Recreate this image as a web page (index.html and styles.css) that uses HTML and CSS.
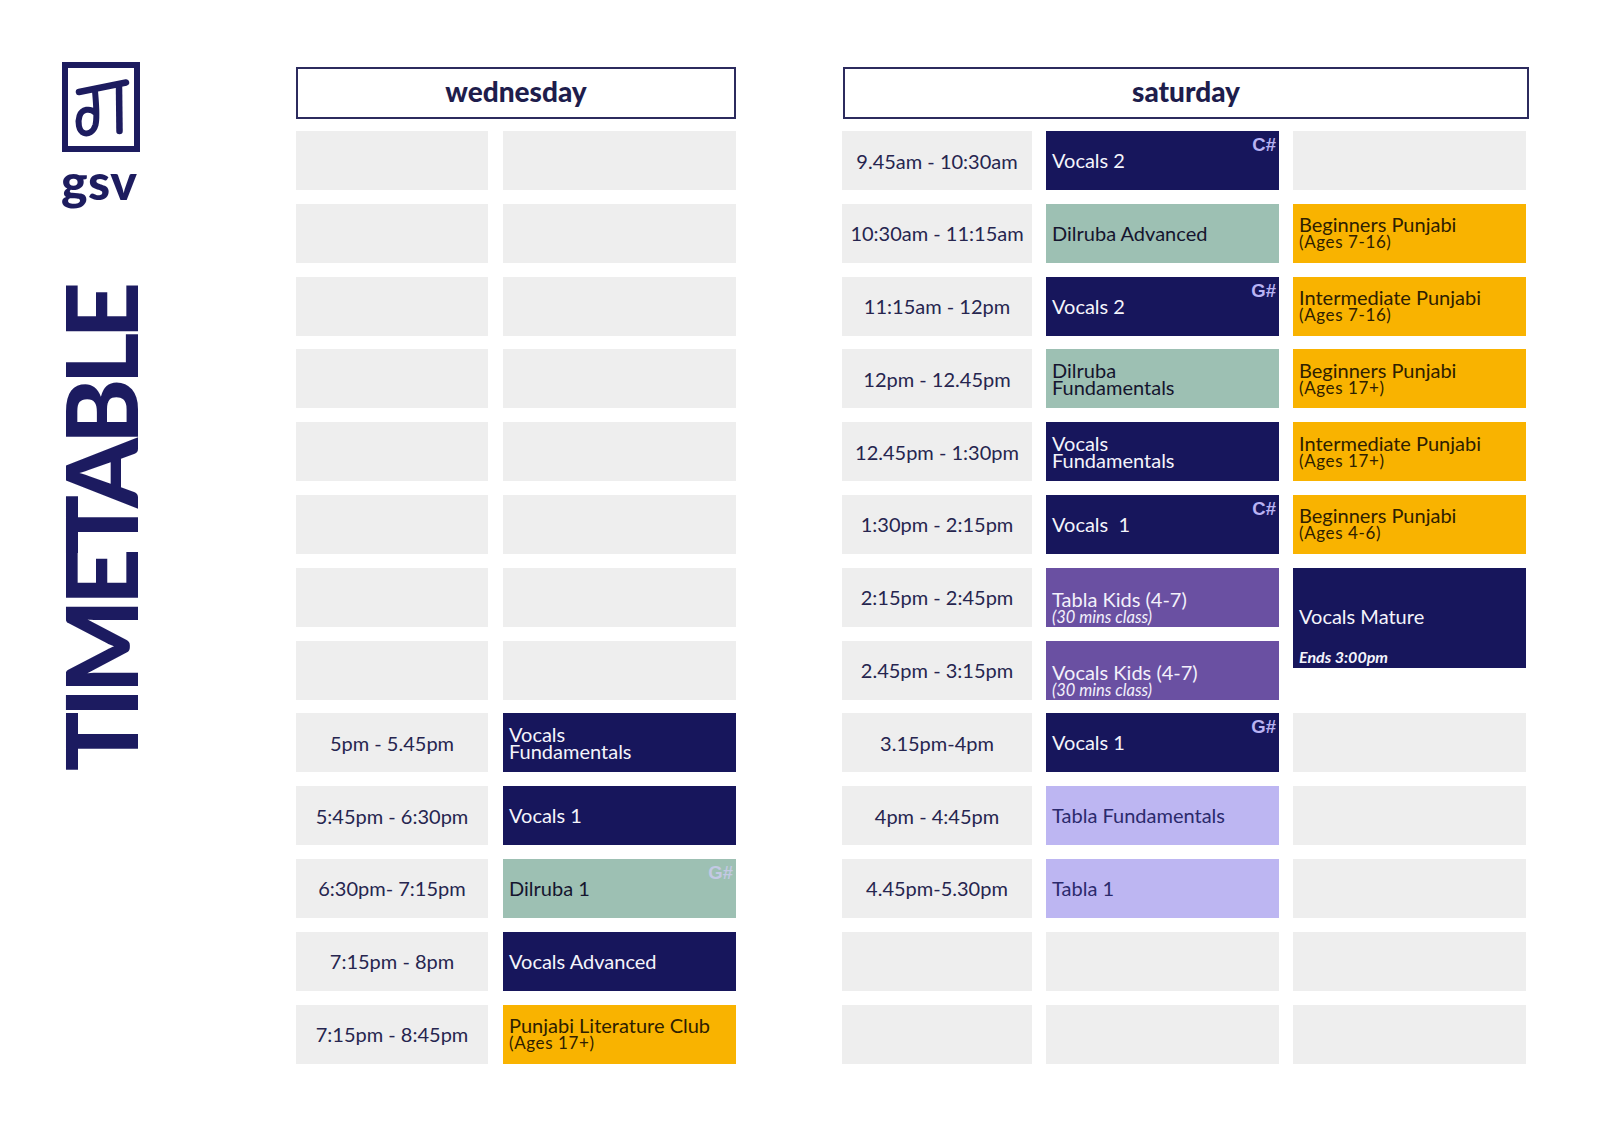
FILE: index.html
```html
<!DOCTYPE html>
<html lang="en">
<head>
<meta charset="utf-8">
<title>GSV Timetable</title>
<link rel="stylesheet" href="styles.css">
</head>
<body>
<div class="page">
  <aside class="side">
    <svg class="logo-mark" width="78" height="90" viewBox="0 0 78 90" aria-hidden="true">
      <rect x="3" y="3" width="72" height="84" fill="none" stroke="#1d1c5f" stroke-width="6"/>
      <path d="M17 30 L64 20.5" fill="none" stroke="#1d1c5f" stroke-width="6.5" stroke-linecap="round"/>
      <path d="M57 24 L57.5 69" fill="none" stroke="#1d1c5f" stroke-width="6.5" stroke-linecap="round"/>
      <path d="M33 29 C34 41 35.5 55 33.5 63 C31.5 70 26 72.5 22 71 C16.5 69 15.5 60 17.5 54 C20 47 28 45.5 33.5 51" fill="none" stroke="#1d1c5f" stroke-width="6" stroke-linecap="round"/>
    </svg>
    <div class="gsv">gsv</div>
    <div class="title">TIMETABLE</div>
  </aside>

  <section class="day day-wed">
    <header class="day-head">wednesday</header>
    <div class="grid grid-wed">
      <div class="cell"></div><div class="cell"></div>
      <div class="cell"></div><div class="cell"></div>
      <div class="cell"></div><div class="cell"></div>
      <div class="cell"></div><div class="cell"></div>
      <div class="cell"></div><div class="cell"></div>
      <div class="cell"></div><div class="cell"></div>
      <div class="cell"></div><div class="cell"></div>
      <div class="cell"></div><div class="cell"></div>
      <div class="cell time">5pm - 5.45pm</div>
      <div class="cell navy tight"><span>Vocals</span><span>Fundamentals</span></div>
      <div class="cell time">5:45pm - 6:30pm</div>
      <div class="cell navy">Vocals 1</div>
      <div class="cell time">6:30pm- 7:15pm</div>
      <div class="cell sage">Dilruba 1<span class="tag tag-faint">G#</span></div>
      <div class="cell time">7:15pm - 8pm</div>
      <div class="cell navy">Vocals Advanced</div>
      <div class="cell time">7:15pm - 8:45pm</div>
      <div class="cell orange tight"><span>Punjabi Literature Club</span><span class="sub">(Ages 17+)</span></div>
    </div>
  </section>

  <section class="day day-sat">
    <header class="day-head">saturday</header>
    <div class="grid grid-sat">
      <div class="cell time">9.45am - 10:30am</div>
      <div class="cell navy">Vocals 2<span class="tag">C#</span></div>
      <div class="cell"></div>

      <div class="cell time">10:30am - 11:15am</div>
      <div class="cell sage">Dilruba Advanced</div>
      <div class="cell orange tight"><span>Beginners Punjabi</span><span class="sub">(Ages 7-16)</span></div>

      <div class="cell time">11:15am - 12pm</div>
      <div class="cell navy">Vocals 2<span class="tag">G#</span></div>
      <div class="cell orange tight"><span>Intermediate Punjabi</span><span class="sub">(Ages 7-16)</span></div>

      <div class="cell time">12pm - 12.45pm</div>
      <div class="cell sage tight"><span>Dilruba</span><span>Fundamentals</span></div>
      <div class="cell orange tight"><span>Beginners Punjabi</span><span class="sub">(Ages 17+)</span></div>

      <div class="cell time">12.45pm - 1:30pm</div>
      <div class="cell navy tight"><span>Vocals</span><span>Fundamentals</span></div>
      <div class="cell orange tight"><span>Intermediate Punjabi</span><span class="sub">(Ages 17+)</span></div>

      <div class="cell time">1:30pm - 2:15pm</div>
      <div class="cell navy">Vocals&nbsp; 1<span class="tag">C#</span></div>
      <div class="cell orange tight"><span>Beginners Punjabi</span><span class="sub">(Ages 4-6)</span></div>

      <div class="cell time">2:15pm - 2:45pm</div>
      <div class="cell purple kids"><span>Tabla Kids (4-7)</span><em>(30 mins class)</em></div>
      <div class="cell navy mature"><span>Vocals Mature</span><em>Ends 3:00pm</em></div>

      <div class="cell time">2.45pm - 3:15pm</div>
      <div class="cell purple kids"><span>Vocals Kids (4-7)</span><em>(30 mins class)</em></div>

      <div class="cell time">3.15pm-4pm</div>
      <div class="cell navy">Vocals 1<span class="tag">G#</span></div>
      <div class="cell"></div>

      <div class="cell time">4pm - 4:45pm</div>
      <div class="cell lavender">Tabla Fundamentals</div>
      <div class="cell"></div>

      <div class="cell time">4.45pm-5.30pm</div>
      <div class="cell lavender">Tabla 1</div>
      <div class="cell"></div>

      <div class="cell"></div><div class="cell"></div><div class="cell"></div>
      <div class="cell"></div><div class="cell"></div><div class="cell"></div>
    </div>
  </section>
</div>
</body>
</html>
```

FILE: styles.css
```css
html, body {
  margin: 0;
  padding: 0;
  background: #ffffff;
}

body {
  width: 1600px;
  height: 1131px;
  overflow: hidden;
  font-family: "Lato", "Open Sans", sans-serif;
}

.page {
  display: flex;
  align-items: flex-start;
  padding: 62px 0 0 62px;
}

/* ---------- left side ---------- */
.side {
  width: 80px;
  display: flex;
  flex-direction: column;
  align-items: flex-start;
}

.logo-mark {
  display: block;
}

.gsv {
  margin-top: 4px;
  margin-left: -1px;
  font-family: "Lato", sans-serif;
  font-weight: 900;
  font-size: 50px;
  line-height: 50px;
  letter-spacing: 0.5px;
  color: #1d1c5f;
}

.title {
  margin-top: 82px;
  margin-left: 1px;
  writing-mode: vertical-rl;
  transform: rotate(180deg);
  font-family: "Lato", sans-serif;
  font-weight: 900;
  font-size: 99px;
  line-height: 74px;
  letter-spacing: -6px;
  color: #1c1b60;
}

/* ---------- day sections ---------- */
.day {
  display: flex;
  flex-direction: column;
  padding-top: 5px;
}

.day-wed {
  margin-left: 154px;
  width: 440px;
}

.day-sat {
  margin-left: 107px;
  width: 686px;
}

.day-head {
  box-sizing: border-box;
  height: 52px;
  border: 2px solid #2c2b5e;
  display: flex;
  align-items: center;
  justify-content: center;
  font-family: "Lato", sans-serif;
  font-weight: 900;
  font-size: 28px;
  color: #1e1d4c;
  padding-bottom: 4px;
}

.grid {
  display: grid;
  grid-template-rows: repeat(13, 59px);
  row-gap: 13.8px;
  margin-top: 12px;
}

.grid-wed {
  grid-template-columns: 192px 233px;
  column-gap: 15px;
}

.grid-sat {
  grid-template-columns: 190px 233px 233px;
  column-gap: 14px;
  margin-left: -1px;
}

/* ---------- cells ---------- */
.cell {
  position: relative;
  box-sizing: border-box;
  background: #eeeeee;
  display: flex;
  flex-direction: column;
  justify-content: center;
  padding: 0 6px;
  font-size: 20px;
  line-height: 23px;
  color: #26254f;
}

.time {
  align-items: center;
  text-align: center;
  padding-top: 1px;
}

.tight {
  line-height: 17px;
}

.sub {
  font-size: 17px;
  letter-spacing: 0.6px;
}

.navy {
  background: #17165c;
  color: #f4f4fb;
}

.sage {
  background: #9dc0b3;
  color: #15152e;
}

.orange {
  background: #f9b300;
  color: #2e2000;
}

.purple {
  background: #6a50a2;
  color: #f3f1fb;
}

.lavender {
  background: #bdb6f2;
  color: #2b2a6c;
}

.tag {
  position: absolute;
  top: 4px;
  right: 3px;
  font-family: "Liberation Sans", Arial, sans-serif;
  font-weight: 700;
  font-size: 18.5px;
  line-height: 19px;
  color: #b9b3f3;
}

.tag-faint {
  color: #c3c9e4;
}

.kids {
  justify-content: flex-end;
  padding-bottom: 1px;
  line-height: 19px;
}

.kids em {
  font-size: 16.5px;
  line-height: 17px;
}

.mature {
  grid-row: span 2;
  align-self: start;
  height: 100px;
  justify-content: flex-start;
  padding-top: 37px;
  padding-bottom: 2px;
}

.mature em {
  margin-top: auto;
  font-size: 16px;
  font-weight: 700;
  line-height: 18px;
}
```
